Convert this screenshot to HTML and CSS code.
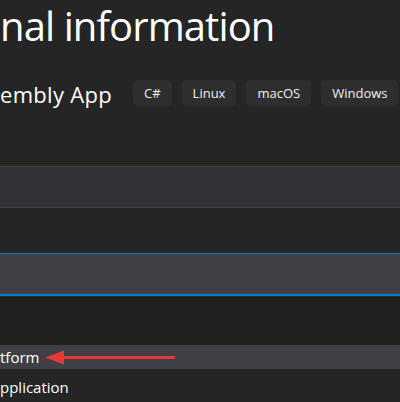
FILE: index.html
```html
<!DOCTYPE html>
<html>
<head>
<meta charset="utf-8">
<link rel="stylesheet" href="styles.css">
</head>
<body>
<div class="page">
  <h1 class="title">nal information</h1>
  <div class="subrow">
    <span class="subtitle">embly App</span>
    <div class="tags">
      <span class="tag">C#</span>
      <span class="tag">Linux</span>
      <span class="tag">macOS</span>
      <span class="tag">Windows</span>
    </div>
  </div>
  <div class="spacer1"></div>
  <div class="band1"></div>
  <div class="spacer2"></div>
  <div class="band2"></div>
  <div class="dark"></div>
  <div class="row hl"><span>tform</span>
    <svg class="arrow" width="140" height="20" viewBox="0 0 140 20">
      <polygon points="0,8.5 19,1.5 19,15.5" fill="#e8383b"/>
      <rect x="17" y="7" width="113" height="3" fill="#e8383b"/>
    </svg>
  </div>
  <div class="row"><span>pplication</span></div>
</div>
</body>
</html>
```
FILE: styles.css
```css
html, body {
  margin: 0;
  padding: 0;
  background: #252526;
}
body {
  width: 400px;
  height: 402px;
  overflow: hidden;
  font-family: "Segoe UI", "Open Sans", "Noto Sans", sans-serif;
  color: #ffffff;
}
.page {
  display: flex;
  flex-direction: column;
}
.title {
  margin: 0;
  height: 74px;
  padding-top: 4px;
  font-size: 40px;
  font-weight: 400;
  line-height: 44px;
  letter-spacing: -0.9px;
  white-space: nowrap;
}
.subrow {
  display: flex;
  align-items: center;
  height: 30px;
  gap: 21px;
}
.subtitle {
  font-size: 22px;
  letter-spacing: 0.3px;
  white-space: nowrap;
  margin-top: 1px;
}
.tags {
  display: flex;
  gap: 10px;
}
.tag {
  background: #2e2e2e;
  border-radius: 5px;
  height: 26px;
  padding: 0 11px;
  font-size: 13px;
  line-height: 26px;
  color: #f0f0f0;
  white-space: nowrap;
}
.spacer1 {
  height: 58px;
}
.band1 {
  height: 40px;
  background: #333337;
  border-top: 1px solid #424246;
  border-bottom: 1px solid #424246;
}
.spacer2 {
  height: 45px;
}
.band2 {
  height: 40px;
  background: #3f3f46;
  border-top: 1px solid #0a7acc;
  border-bottom: 2px solid #0a7acc;
}
.dark {
  height: 48px;
  background: #20201e;
  border-top: 1px solid #2b2a26;
}
.row {
  position: relative;
  height: 24px;
  font-size: 15px;
  line-height: 24px;
  white-space: nowrap;
}
.hl {
  background: #3f3f46;
}
.row + .row {
  height: 34px;
  line-height: 36px;
}
.arrow {
  position: absolute;
  left: 45px;
  top: 4px;
}
```
